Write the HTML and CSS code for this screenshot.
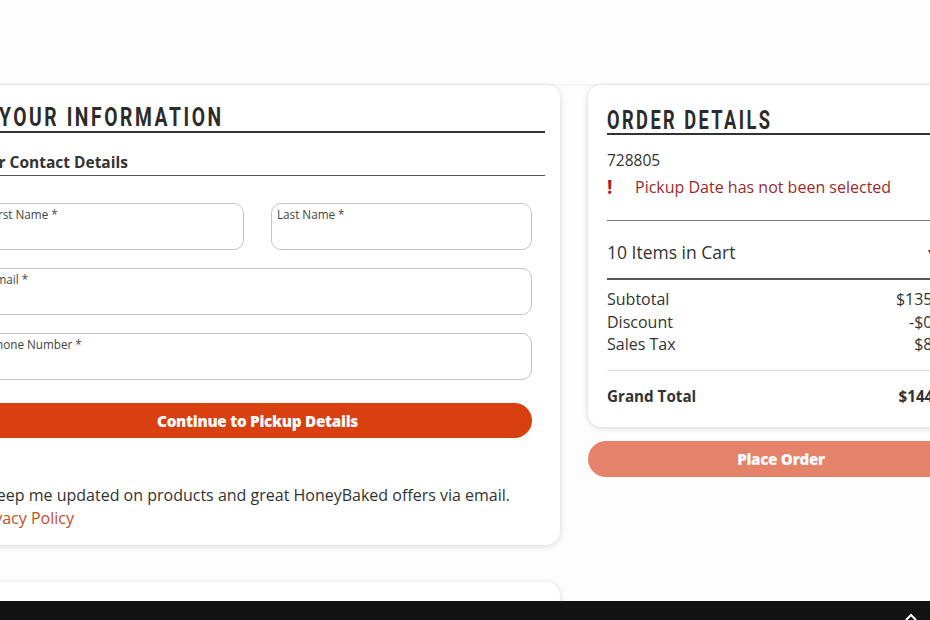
FILE: index.html
```html
<!DOCTYPE html>
<html lang="en">
<head>
<meta charset="utf-8">
<title>Checkout</title>
<link rel="stylesheet" href="styles.css">
</head>
<body>
<header class="top"></header>
<main class="layout">
  <section class="left-col">
    <div class="card info-card">
      <h2 class="title info-title"><span class="title-text">YOUR INFORMATION</span></h2>
      <h3 class="subtitle">Your Contact Details</h3>
      <form class="form">
        <div class="row two">
          <label class="field"><span class="lbl">First Name *</span></label>
          <label class="field"><span class="lbl">Last Name *</span></label>
        </div>
        <label class="field"><span class="lbl">Email *</span></label>
        <label class="field"><span class="lbl">Phone Number *</span></label>
        <button type="button" class="btn-primary">Continue to Pickup Details</button>
      </form>
      <p class="optin"><span class="check"></span>Keep me updated on products and great HoneyBaked offers via email. <a class="link" href="#">Privacy Policy</a></p>
    </div>
    <div class="card next-card"></div>
  </section>
  <aside class="right-col">
    <div class="card order-card">
      <h2 class="title order-title"><span class="title-text">ORDER DETAILS</span></h2>
      <div class="order-no">728805</div>
      <div class="error"><span class="bang">!</span><span>Pickup Date has not been selected</span></div>
      <div class="items-row"><span>10 Items in Cart</span><span class="caret">&#9662;</span></div>
      <div class="totals">
        <div class="line"><span>Subtotal</span><span>$135.90</span></div>
        <div class="line"><span>Discount</span><span>-$0.00</span></div>
        <div class="line"><span>Sales Tax</span><span>$8.29</span></div>
      </div>
      <div class="line grand"><span>Grand Total</span><span>$144.19</span></div>
    </div>
    <button type="button" class="btn-place">Place Order</button>
  </aside>
</main>
<footer class="bottom-bar">
  <svg class="up" width="12" height="8" viewBox="0 0 12 8"><path d="M1 7 L6 2 L11 7" fill="none" stroke="#fff" stroke-width="2"/></svg>
</footer>
</body>
</html>
```

FILE: styles.css
```css
* { box-sizing: border-box; }
html, body { margin: 0; padding: 0; }
body {
  background: #fdfdfd;
  font-family: "Open Sans", "Noto Sans", sans-serif;
  color: #333;
  overflow: hidden;
  height: 620px;
}
.top {
  height: 84px;
  background: #fdfdfd;
  box-shadow: 0 1px 3px rgba(0,0,0,0.06);
}
.layout {
  display: flex;
  gap: 28px;
  margin-left: -46px;
  margin-top: 1px;
  width: 1020px;
}
.left-col { width: 606px; flex: none; }
.right-col { width: 386px; flex: none; }
.card {
  background: #fff;
  border-radius: 14px;
  box-shadow: 0 1px 6px rgba(0,0,0,0.16);
}
.info-card { padding: 18px 15px 15px 15px; }
.next-card { height: 80px; margin-top: 37px; }
.title {
  margin: 0;
  font-family: Roboto, "Liberation Sans", sans-serif;
  font-weight: bold;
  font-size: 26px;
  letter-spacing: 3.5px;
  line-height: 28px;
  color: #2b2b2b;
  border-bottom: 2px solid #333;
  white-space: nowrap;
  overflow: hidden;
}
.title-text {
  display: inline-block;
  transform: scaleX(0.74);
  transform-origin: 0 50%;
}
.info-title { padding-left: 30px; line-height: 28px; }
.subtitle {
  margin: 19px 0 0 0;
  font-size: 15.5px;
  font-weight: 700;
  line-height: 20px;
  padding-bottom: 3px;
  border-bottom: 1px solid #555;
  color: #333;
}
.form {
  display: flex;
  flex-direction: column;
  gap: 18px;
  padding: 0 13px 0 14px;
  margin-top: 27px;
}
.row.two { display: flex; gap: 27px; }
.row.two .field { flex: 1; }
.field {
  display: block;
  height: 47px;
  border: 1px solid #c4c4c4;
  border-radius: 10px;
  padding: 3px 5px;
  background: #fff;
}
.lbl { font-size: 11.7px; line-height: 15px; color: #444; display: block; }
.btn-primary {
  margin-top: 5px;
  height: 35px;
  border: none;
  border-radius: 18px;
  background: #d8400f;
  color: #fff;
  font-family: "Open Sans", sans-serif;
  font-weight: 800;
  font-size: 15.3px;
  letter-spacing: -0.3px;
}
.optin {
  margin: 46px 0 0 0;
  font-size: 16px;
  line-height: 23px;
  color: #333;
}
.check {
  display: inline-block;
  width: 14px;
  height: 14px;
  border: 1px solid #777;
  border-radius: 2px;
  margin-right: 4px;
  vertical-align: -2px;
}
.link { display: block; padding-left: 5px; color: #c0502a; text-decoration: none; }

.order-card { padding: 22px 19px 20px 19px; }
.order-title { line-height: 26px; }
.order-title .title-text { transform: scaleX(0.7); }
.order-no { margin-top: 14px; font-size: 15.5px; line-height: 22px; }
.error {
  display: flex;
  align-items: center;
  font-size: 16px;
  line-height: 22px;
  color: #9b2a2b;
  margin-top: 5px;
  padding-bottom: 22px;
  border-bottom: 1px solid #777;
}
.bang { color: #b4121b; font-weight: 700; font-size: 19px; width: 28px; }
.items-row {
  display: flex;
  justify-content: space-between;
  align-items: center;
  font-size: 17.5px;
  line-height: 24px;
  padding: 19px 20px 14px 0;
  border-bottom: 2px solid #555;
}
.caret { font-size: 14px; color: #333; }
.totals {
  padding: 8px 0 14px 0;
  border-bottom: 1px solid #e2e2e2;
}
.line {
  display: flex;
  justify-content: space-between;
  font-size: 16px;
  line-height: 22.5px;
}
.grand { font-weight: 700; font-size: 15.2px; margin-top: 14px; }
.btn-place {
  display: block;
  width: 100%;
  margin-top: 14px;
  height: 36px;
  border: none;
  border-radius: 18px;
  background: #e5826a;
  color: #fff;
  font-family: "Open Sans", sans-serif;
  font-weight: 800;
  font-size: 15.2px;
  letter-spacing: -0.3px;
}
.bottom-bar {
  position: fixed;
  left: 0;
  right: 0;
  bottom: 0;
  height: 19px;
  background: #121212;
}
.up { position: absolute; left: 905px; top: 12px; }
```
